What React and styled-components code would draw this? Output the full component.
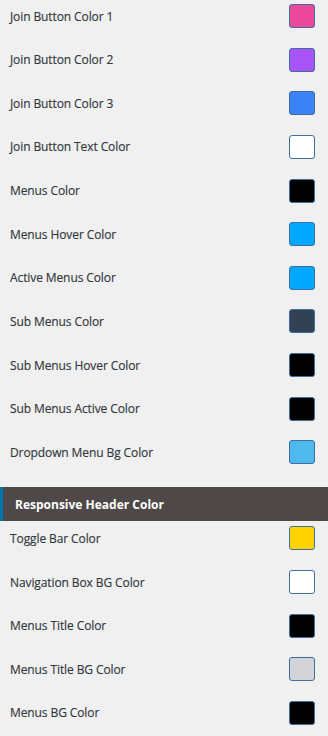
import React from "react";
import styled, { createGlobalStyle } from "styled-components";

const Global = createGlobalStyle`
  html, body { margin: 0; padding: 0; background: #f0f0f1; }
  body { font-family: "Open Sans", "Noto Sans", sans-serif; }
`;

const Page = styled.div`
  width: 328px;
  height: 736px;
  overflow: hidden;
  background: #f0f0f1;
`;

const List = styled.div`
  display: flex;
  flex-direction: column;
  gap: 19.65px;
  padding: ${(p) => p.$pad || "0"};
`;

const Row = styled.div`
  display: flex;
  align-items: center;
  justify-content: space-between;
  height: 24px;
  padding: 0 13px 0 10px;
`;

const Label = styled.span`
  font-size: 12px;
  color: #32373c;
  letter-spacing: -0.1px;
  -webkit-text-stroke: 0.15px #32373c;
`;

const Swatch = styled.span`
  width: 24px;
  height: 22px;
  border-radius: 3px;
  border: 1px solid #3f6ea3;
  background: ${(p) => p.$c};
`;

const Header = styled.div`
  height: 34px;
  display: flex;
  align-items: center;
  background: #4e4948;
  border-left: 3px solid #0073aa;
  padding-left: 12px;
  margin: 23px 0 5px;
  color: #fff;
  font-weight: 700;
  font-size: 12px;
`;

const first = [
  ["Join Button Color 1", "#ec4899"],
  ["Join Button Color 2", "#a855f7"],
  ["Join Button Color 3", "#3b82f6"],
  ["Join Button Text Color", "#ffffff"],
  ["Menus Color", "#000000"],
  ["Menus Hover Color", "#00a8ff"],
  ["Active Menus Color", "#00a8ff"],
  ["Sub Menus Color", "#334155"],
  ["Sub Menus Hover Color", "#000000"],
  ["Sub Menus Active Color", "#000000"],
  ["Dropdown Menu Bg Color", "#4fb8ec"],
];

const second = [
  ["Toggle Bar Color", "#ffd200"],
  ["Navigation Box BG Color", "#ffffff"],
  ["Menus Title Color", "#000000"],
  ["Menus Title BG Color", "#d4d4d8"],
  ["Menus BG Color", "#000000"],
];

export default function App() {
  return (
    <Page>
      <Global />
      <List $pad="4px 0 0">
        {first.map(([l, c]) => (
          <Row key={l}>
            <Label>{l}</Label>
            <Swatch $c={c} />
          </Row>
        ))}
      </List>
      <Header>Responsive Header Color</Header>
      <List>
        {second.map(([l, c]) => (
          <Row key={l}>
            <Label>{l}</Label>
            <Swatch $c={c} />
          </Row>
        ))}
      </List>
    </Page>
  );
}
